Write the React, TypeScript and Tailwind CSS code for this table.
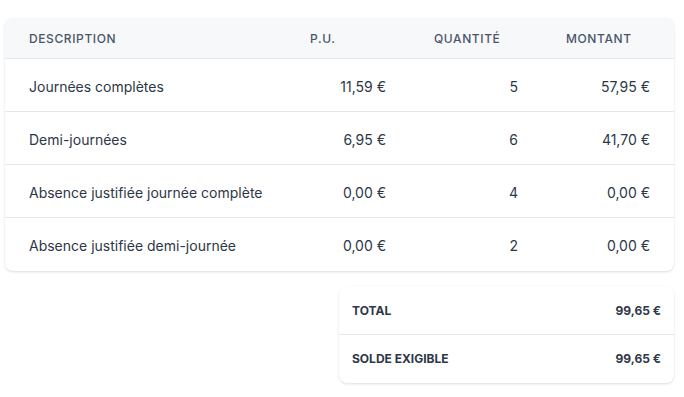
import React from "react";

const rows = [
  { d: "Journées complètes", pu: "11,59 €", q: "5", m: "57,95 €" },
  { d: "Demi-journées", pu: "6,95 €", q: "6", m: "41,70 €" },
  { d: "Absence justifiée journée complète", pu: "0,00 €", q: "4", m: "0,00 €" },
  { d: "Absence justifiée demi-journée", pu: "0,00 €", q: "2", m: "0,00 €" },
];

const cols = "grid grid-cols-[281px_124px_132px_132px]";

export default function App() {
  return (
    <div
      className="w-[684px] h-[397px] bg-white pl-[5px] pr-[10px] pt-[18px]"
      style={{ fontFamily: "Inter, 'Noto Sans', sans-serif" }}
    >
      <div className="w-[669px] rounded-lg bg-white shadow-[0_1px_3px_rgba(0,0,0,0.1),0_1px_2px_rgba(0,0,0,0.04)] overflow-hidden">
        <div className={`${cols} h-[41px] pt-[2px] items-center bg-[#f7f8fa] border-b border-[#e2e8f0] text-xs font-medium uppercase tracking-wider text-[#4a5568]`}>
          <div className="px-6">Description</div>
          <div className="px-6">P.U.</div>
          <div className="px-6">Quantité</div>
          <div className="px-6">Montant</div>
        </div>
        {rows.map((r, i) => (
          <div
            key={i}
            className={`${cols} h-[53px] pt-[3px] items-center text-sm text-[#2d3748] ${i < rows.length - 1 ? "border-b border-[#e2e8f0]" : ""}`}
          >
            <div className="pl-6 whitespace-nowrap">{r.d}</div>
            <div className="px-6 text-right">{r.pu}</div>
            <div className="px-6 text-right">{r.q}</div>
            <div className="px-6 text-right">{r.m}</div>
          </div>
        ))}
      </div>
      <div className="mt-4 ml-auto w-[335px] rounded-lg bg-white shadow-[0_1px_3px_rgba(0,0,0,0.1),0_1px_2px_rgba(0,0,0,0.04)] text-xs font-bold text-[#2d3748]">
        <div className="flex h-[48px] items-center justify-between px-[13px] border-b border-[#e2e8f0]">
          <span>TOTAL</span>
          <span>99,65 €</span>
        </div>
        <div className="flex h-[48px] items-center justify-between px-[13px]">
          <span>SOLDE EXIGIBLE</span>
          <span>99,65 €</span>
        </div>
      </div>
    </div>
  );
}
